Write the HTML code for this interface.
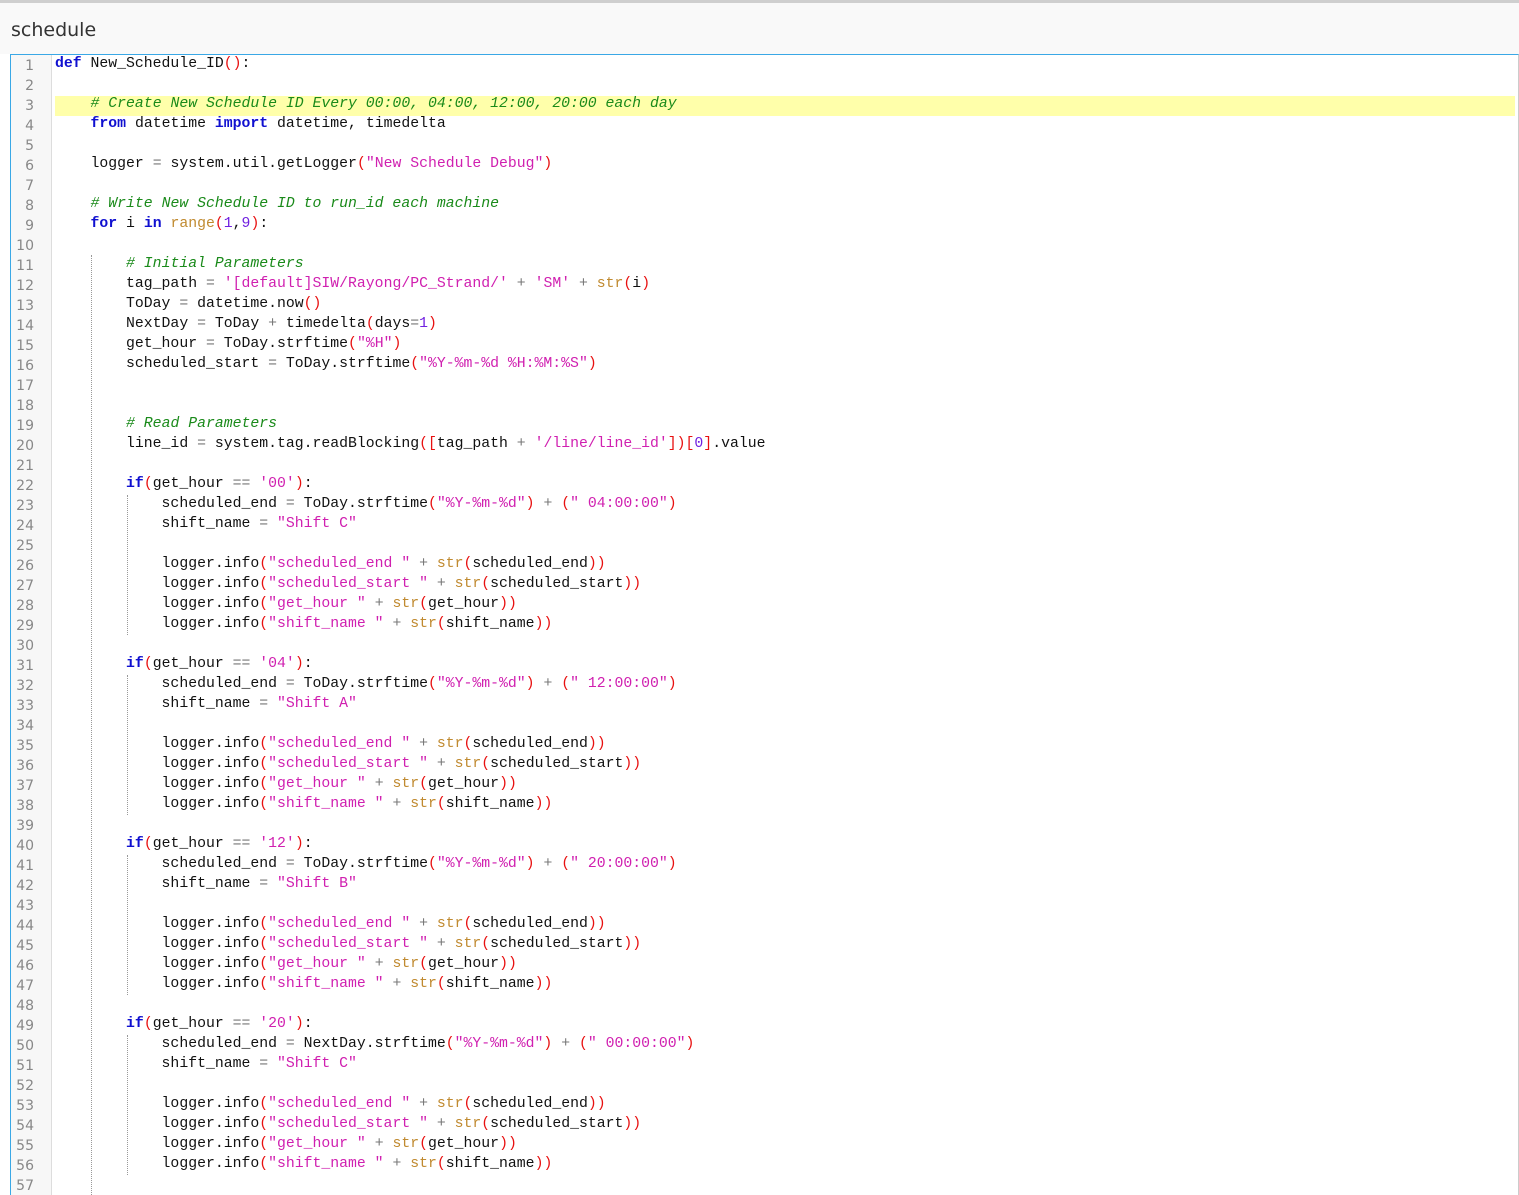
<!DOCTYPE html>
<html><head><meta charset="utf-8"><style>
body{margin:0;width:1519px;height:1188px;overflow:hidden;background:#fff;font-family:"Liberation Sans",sans-serif;position:relative}
.top{position:absolute;left:0;top:0;width:1519px;height:3px;background:#cfcfcf}
.hdr{position:absolute;left:0;top:3px;width:1519px;height:51px;background:#f9f9f9}
.hdr span{position:absolute;left:11px;top:16px;font-size:19px;color:#333;font-family:"DejaVu Sans",sans-serif}
.ed{position:absolute;left:10px;top:54px;width:1507px;height:1140px;border-top:1px solid #3aa8e6;border-left:1px solid #3aa8e6;border-right:1px solid #ccc;background:#fff;overflow:hidden}
.gut{position:absolute;left:0;top:0;width:40px;height:100%;background:#f7f7f7;border-right:1px solid #ddd}
.ln{position:absolute;left:0;width:23px;text-align:right;font:14px "DejaVu Sans",sans-serif;color:#888;height:20px;line-height:20px}
.l{position:absolute;left:44px;height:20px;line-height:20px;font:14.8px "Liberation Mono",monospace;color:#111;white-space:pre;width:1460px}
.hl{background:#ffffaa}
.g{position:absolute;border-left:1px dotted #999;width:0}
.k{color:#1010d0;font-weight:bold}.c{color:#1a8a1a;font-style:italic}.s{color:#d020b0}.p{color:#e81010}.b{color:#c08a30}.n{color:#7020e0}.o{color:#777}
</style></head><body>
<div class="top"></div><div class="hdr"><span>schedule</span></div>
<div class="ed"><div class="gut"></div>
<div class="g" style="left:80px;top:200px;height:940px"></div>
<div class="g" style="left:116px;top:440px;height:140px"></div>
<div class="g" style="left:116px;top:620px;height:140px"></div>
<div class="g" style="left:116px;top:800px;height:140px"></div>
<div class="g" style="left:116px;top:980px;height:140px"></div>
<div id="c"></div>
</div>
<script>
const L=[
'<span class="k">def</span> New_Schedule_ID<span class="p">()</span>:',
'',
'    <span class="c"># Create New Schedule ID Every 00:00, 04:00, 12:00, 20:00 each day</span>',
'    <span class="k">from</span> datetime <span class="k">import</span> datetime, timedelta',
'',
'    logger <span class="o">=</span> system.util.getLogger<span class="p">(</span><span class="s">"New Schedule Debug"</span><span class="p">)</span>',
'',
'    <span class="c"># Write New Schedule ID to run_id each machine</span>',
'    <span class="k">for</span> i <span class="k">in</span> <span class="b">range</span><span class="p">(</span><span class="n">1</span>,<span class="n">9</span><span class="p">)</span>:',
'',
'        <span class="c"># Initial Parameters</span>',
'        tag_path <span class="o">=</span> <span class="s">\'[default]SIW/Rayong/PC_Strand/\'</span> <span class="o">+</span> <span class="s">\'SM\'</span> <span class="o">+</span> <span class="b">str</span><span class="p">(</span>i<span class="p">)</span>',
'        ToDay <span class="o">=</span> datetime.now<span class="p">()</span>',
'        NextDay <span class="o">=</span> ToDay <span class="o">+</span> timedelta<span class="p">(</span>days<span class="o">=</span><span class="n">1</span><span class="p">)</span>',
'        get_hour <span class="o">=</span> ToDay.strftime<span class="p">(</span><span class="s">"%H"</span><span class="p">)</span>',
'        scheduled_start <span class="o">=</span> ToDay.strftime<span class="p">(</span><span class="s">"%Y-%m-%d %H:%M:%S"</span><span class="p">)</span>',
'','',
'        <span class="c"># Read Parameters</span>',
'        line_id <span class="o">=</span> system.tag.readBlocking<span class="p">([</span>tag_path <span class="o">+</span> <span class="s">\'/line/line_id\'</span><span class="p">])[</span><span class="n">0</span><span class="p">]</span>.value',
''];
function blk(h,e,sh){return [
'        <span class="k">if</span><span class="p">(</span>get_hour <span class="o">==</span> <span class="s">\''+h+'\'</span><span class="p">)</span>:',
'            scheduled_end <span class="o">=</span> '+(e?'NextDay':'ToDay')+'.strftime<span class="p">(</span><span class="s">"%Y-%m-%d"</span><span class="p">)</span> <span class="o">+</span> <span class="p">(</span><span class="s">" '+(e||'')+'"</span><span class="p">)</span>',
'            shift_name <span class="o">=</span> <span class="s">"Shift '+sh+'"</span>',
'',
'            logger.info<span class="p">(</span><span class="s">"scheduled_end "</span> <span class="o">+</span> <span class="b">str</span><span class="p">(</span>scheduled_end<span class="p">))</span>',
'            logger.info<span class="p">(</span><span class="s">"scheduled_start "</span> <span class="o">+</span> <span class="b">str</span><span class="p">(</span>scheduled_start<span class="p">))</span>',
'            logger.info<span class="p">(</span><span class="s">"get_hour "</span> <span class="o">+</span> <span class="b">str</span><span class="p">(</span>get_hour<span class="p">))</span>',
'            logger.info<span class="p">(</span><span class="s">"shift_name "</span> <span class="o">+</span> <span class="b">str</span><span class="p">(</span>shift_name<span class="p">))</span>',
''];}
</script>
<script>
function fix(a,t){a[1]=a[1].replace('<span class="s">" "</span>','<span class="s">" '+t+'"</span>');return a;}
let all=L.concat(
 blk('00','','C').map(x=>x.replace('" "','" 04:00:00"')),
 blk('04','','A').map(x=>x.replace('" "','" 12:00:00"')),
 blk('12','','B').map(x=>x.replace('" "','" 20:00:00"')),
 blk('20','00:00:00','C'));
all=all.slice(0,57);
let h='';
all.forEach((s,i)=>{let t=i*20+1;h+='<div class="ln" style="top:'+t+'px">'+(i+1)+'</div><div class="l'+(i==2?' hl':'')+'" style="top:'+t+'px">'+s+'</div>';});
document.getElementById('c').innerHTML=h;
</script>
</body></html>
